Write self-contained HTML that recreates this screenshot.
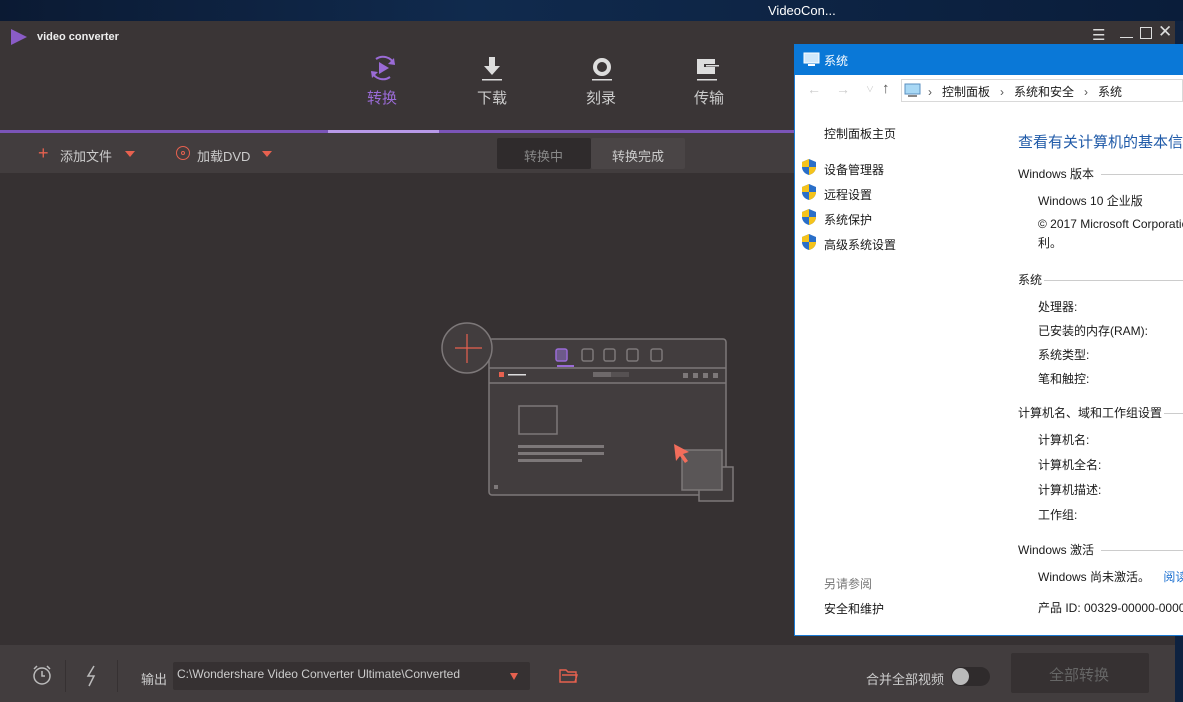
<!DOCTYPE html>
<html><head><meta charset="utf-8">
<style>
*{margin:0;padding:0;box-sizing:border-box}
body{width:1183px;height:702px;overflow:hidden;position:relative;background:#0e2240;font-family:"Liberation Sans","Noto Sans CJK SC",sans-serif}
.a{position:absolute}
.t{color:#fff;white-space:nowrap}
.w{position:absolute;white-space:nowrap;font-size:12px;color:#1a1a1a}
</style></head><body>
<div class="a" style="left:0;top:0;width:1183px;height:21px;background:linear-gradient(90deg,#0b1a33,#102a4d 40%,#0a1d3a)"></div>
<div class="a t" style="left:768px;top:3px;font-size:13px">VideoCon...</div>
<!-- app -->
<div class="a" style="left:0;top:21px;width:1175px;height:681px;background:#3a3536"></div>
<svg class="a" style="left:10px;top:28px" width="18" height="18"><polygon points="1,1 17,9 1,17" fill="#8a5cc7"/></svg>
<div class="a t" style="left:37px;top:31px;font-size:11px;font-weight:bold;color:#eee">video converter</div>
<div class="a" style="left:1092px;top:26px;color:#ddd;font-size:15px">☰</div>
<div class="a" style="left:1120px;top:29px;width:13px;height:9px;border-bottom:1.5px solid #ddd"></div>
<div class="a" style="left:1140px;top:27px;width:12px;height:12px;border:1.5px solid #ddd"></div>
<div class="a" style="left:1158px;top:22px;color:#ddd;font-size:17px">✕</div>
<!-- nav -->
<svg class="a" style="left:368px;top:53px" width="30" height="30"><path d="M8 6A12 12 0 0 1 26 11M22 24A12 12 0 0 1 4 19" fill="none" stroke="#9a6bd6" stroke-width="2"/><polygon points="26,5 27,12 20,11" fill="#9a6bd6"/><polygon points="4,25 3,18 10,19" fill="#9a6bd6"/><polygon points="11,9 21,15 11,21" fill="#9a6bd6"/></svg>
<div class="a t" style="left:367px;top:87px;font-size:15px;color:#9a6bd6">转换</div>
<svg class="a" style="left:480px;top:56px" width="24" height="26"><rect x="9" y="1" width="6" height="9" fill="#ddd"/><polygon points="4,10 20,10 12,19" fill="#ddd"/><rect x="2" y="23" width="20" height="1.5" fill="#ddd"/></svg>
<div class="a t" style="left:477px;top:87px;font-size:15px;color:#ccc">下载</div>
<svg class="a" style="left:590px;top:56px" width="24" height="26"><circle cx="12" cy="11" r="7" fill="none" stroke="#ddd" stroke-width="4"/><rect x="2" y="23" width="20" height="1.5" fill="#ddd"/></svg>
<div class="a t" style="left:586px;top:87px;font-size:15px;color:#ccc">刻录</div>
<svg class="a" style="left:696px;top:56px" width="26" height="26"><rect x="1" y="3" width="18" height="15" fill="#ddd"/><rect x="8" y="8" width="16" height="3" fill="#3a3536"/><rect x="10" y="9" width="13" height="1.5" fill="#ddd"/><rect x="1" y="23" width="20" height="1.5" fill="#ddd"/></svg>
<div class="a t" style="left:694px;top:87px;font-size:15px;color:#ccc">传输</div>
<div class="a" style="left:0;top:130px;width:795px;height:3px;background:#7b55b8"></div>
<div class="a" style="left:328px;top:130px;width:111px;height:3px;background:#b89ae8"></div>
<!-- toolbar -->
<div class="a" style="left:0;top:133px;width:1175px;height:40px;background:#423d3e"></div>
<div class="a t" style="left:38px;top:143px;font-size:18px;color:#e7614f;line-height:20px">+</div>
<div class="a t" style="left:60px;top:146px;font-size:13px;color:#ccc">添加文件</div>
<div class="a" style="left:125px;top:151px;border:5px solid transparent;border-top:6px solid #e7614f"></div>
<div class="a" style="left:176px;top:146px;width:14px;height:14px;border:1.5px solid #e7614f;border-radius:50%"></div>
<div class="a" style="left:181px;top:151px;width:4px;height:4px;border:1px solid #e7614f;border-radius:50%"></div>
<div class="a t" style="left:197px;top:146px;font-size:13px;color:#ccc">加载DVD</div>
<div class="a" style="left:262px;top:151px;border:5px solid transparent;border-top:6px solid #e7614f"></div>
<div class="a" style="left:497px;top:138px;width:94px;height:31px;background:#2f2b2c;border-radius:2px"></div>
<div class="a" style="left:591px;top:138px;width:94px;height:31px;background:#4a4546;border-radius:2px"></div>
<div class="a t" style="left:524px;top:146px;font-size:13px;color:#888">转换中</div>
<div class="a t" style="left:612px;top:146px;font-size:13px;color:#ccc">转换完成</div>
<!-- main -->
<div class="a" style="left:0;top:173px;width:1175px;height:472px;background:#363132"></div>
<svg class="a" style="left:430px;top:315px" width="320" height="200">
<g fill="none" stroke="#7d7879" stroke-width="1.5">
<rect x="59" y="24" width="237" height="156" rx="3" fill="#423d3e"/>
<line x1="59" y1="53" x2="296" y2="53"/><line x1="59" y1="68" x2="296" y2="68"/>
<circle cx="37" cy="33" r="25" fill="#423d3e"/>
<rect x="89" y="91" width="38" height="28"/>
<rect x="126" y="34" width="11" height="12" rx="2" stroke="#9a6bd6" fill="#6d5a8a"/>
<rect x="152" y="34" width="11" height="12" rx="2"/><rect x="174" y="34" width="11" height="12" rx="2"/><rect x="197" y="34" width="11" height="12" rx="2"/><rect x="221" y="34" width="11" height="12" rx="2"/>
<rect x="269" y="152" width="34" height="34" fill="#3f3a3b"/>
<rect x="252" y="135" width="40" height="40" fill="#5a5657"/>
</g>
<rect x="127" y="50" width="17" height="2" fill="#9a6bd6"/>
<line x1="37" y1="19" x2="37" y2="48" stroke="#e7614f" stroke-width="1.2"/><line x1="25" y1="33" x2="52" y2="33" stroke="#e7614f" stroke-width="1.2"/>
<rect x="69" y="57" width="5" height="5" fill="#e7614f"/><rect x="78" y="59" width="18" height="1.5" fill="#ddd"/>
<rect x="163" y="57" width="18" height="5" fill="#6e696a"/><rect x="181" y="57" width="18" height="5" fill="#565152"/>
<g fill="#7d7879"><rect x="253" y="58" width="5" height="5"/><rect x="263" y="58" width="5" height="5"/><rect x="273" y="58" width="5" height="5"/><rect x="283" y="58" width="5" height="5"/><rect x="88" y="130" width="86" height="3"/><rect x="88" y="137" width="86" height="3"/><rect x="88" y="144" width="64" height="3"/><rect x="64" y="170" width="4" height="4"/></g>
<polygon points="244,129 259,137 253,139 258,146 255,148 250,141 246,146" fill="#f26d5b"/>
</svg>
<!-- bottom -->
<div class="a" style="left:0;top:645px;width:1175px;height:57px;background:#423d3e"></div>
<svg class="a" style="left:31px;top:664px" width="22" height="22"><circle cx="11" cy="12" r="8" fill="none" stroke="#bbb" stroke-width="1.5"/><path d="M11 7v5h3M3 5l3-3M19 5l-3-3" stroke="#bbb" stroke-width="1.5" fill="none"/></svg>
<div class="a" style="left:65px;top:660px;width:1px;height:32px;background:#363132"></div>
<svg class="a" style="left:85px;top:665px" width="14" height="22"><path d="M9 1L3 11h6L4 21" stroke="#bbb" stroke-width="1.5" fill="none"/></svg>
<div class="a" style="left:117px;top:660px;width:1px;height:32px;background:#363132"></div>
<div class="a t" style="left:141px;top:669px;font-size:13px;color:#ccc">输出</div>
<div class="a" style="left:173px;top:662px;width:357px;height:28px;background:#363132;border-radius:2px"></div>
<div class="a t" style="left:177px;top:667px;font-size:12px;color:#ccc">C:\Wondershare Video Converter Ultimate\Converted</div>
<div class="a" style="left:510px;top:673px;border:4px solid transparent;border-top:7px solid #e7614f"></div>
<svg class="a" style="left:559px;top:668px" width="20" height="16"><path d="M1 2h6l2 2h8v10H1z M3 7h15l-2 7" fill="none" stroke="#e7614f" stroke-width="1.4"/></svg>
<div class="a t" style="left:866px;top:669px;font-size:13px;color:#ccc">合并全部视频</div>
<div class="a" style="left:951px;top:667px;width:39px;height:19px;background:#2f2b2c;border-radius:10px"></div>
<div class="a" style="left:952px;top:668px;width:17px;height:17px;background:#bbb;border-radius:50%"></div>
<div class="a" style="left:1011px;top:653px;width:138px;height:40px;background:#363132;border-radius:2px"></div>
<div class="a t" style="left:1049px;top:664px;font-size:15px;color:#666">全部转换</div>
<!-- system window -->
<div class="a" style="left:794px;top:44px;width:389px;height:592px;background:#fff;border-left:1px solid #1a7ad4;border-bottom:1px solid #1a7ad4"></div>
<div class="a" style="left:794px;top:44px;width:389px;height:31px;background:#0a78d7"></div>
<svg class="a" style="left:803px;top:52px" width="17" height="14"><rect x="1" y="1" width="15" height="10" fill="#cfe8fb" stroke="#fff"/><rect x="5" y="12" width="7" height="2" fill="#fff"/></svg>
<div class="a t" style="left:824px;top:52px;font-size:12px">系统</div>
<div class="a" style="left:807px;top:81px;color:#ccc;font-size:14px">←</div>
<div class="a" style="left:836px;top:81px;color:#ccc;font-size:14px">→</div>
<div class="a" style="left:866px;top:84px;color:#ccc;font-size:8px">∨</div>
<div class="a" style="left:882px;top:80px;color:#555;font-size:15px">↑</div>
<div class="a" style="left:901px;top:79px;width:282px;height:23px;border:1px solid #d9d9d9"></div>
<svg class="a" style="left:904px;top:83px" width="17" height="14"><rect x="1" y="1" width="15" height="10" fill="#a8d8f5" stroke="#5a8fc0"/><rect x="4" y="12" width="9" height="2" fill="#888"/></svg>
<div class="w" style="left:928px;top:83px;color:#555">›&nbsp;&nbsp;&nbsp;<span style="color:#1a1a1a">控制面板</span>&nbsp;&nbsp;&nbsp;›&nbsp;&nbsp;&nbsp;<span style="color:#1a1a1a">系统和安全</span>&nbsp;&nbsp;&nbsp;›&nbsp;&nbsp;&nbsp;<span style="color:#1a1a1a">系统</span></div>
<div class="w" style="left:824px;top:125px">控制面板主页</div>
<svg width="0" height="0"><defs><g id="sh"><path d="M7 0L14 3v5c0 4-3 7-7 8C3 15 0 12 0 8V3z" fill="#2a6fc9"/><path d="M7 0v8H0V3zM7 8h7c0 4-3 7-7 8z" fill="#f5c31c"/></g></defs></svg>
<svg class="a" style="left:802px;top:159px" width="15" height="100"><use href="#sh"/><use href="#sh" y="25"/><use href="#sh" y="50"/><use href="#sh" y="75"/></svg>
<div class="w" style="left:824px;top:161px">设备管理器</div>
<div class="w" style="left:824px;top:186px">远程设置</div>
<div class="w" style="left:824px;top:211px">系统保护</div>
<div class="w" style="left:824px;top:236px">高级系统设置</div>
<div class="w" style="left:824px;top:575px;color:#777">另请参阅</div>
<div class="w" style="left:824px;top:600px">安全和维护</div>
<div class="w" style="left:1018px;top:131px;font-size:15px;color:#1f5aa8">查看有关计算机的基本信息</div>
<div class="w" style="left:1018px;top:165px">Windows 版本</div><div class="a" style="left:1101px;top:174px;width:82px;height:1px;background:#ccc"></div>
<div class="w" style="left:1038px;top:192px">Windows 10 企业版</div>
<div class="w" style="left:1038px;top:217px">© 2017 Microsoft Corporation</div>
<div class="w" style="left:1038px;top:234px">利。</div>
<div class="w" style="left:1018px;top:271px">系统</div><div class="a" style="left:1044px;top:280px;width:139px;height:1px;background:#ccc"></div>
<div class="w" style="left:1038px;top:298px">处理器:</div>
<div class="w" style="left:1038px;top:322px">已安装的内存(RAM):</div>
<div class="w" style="left:1038px;top:346px">系统类型:</div>
<div class="w" style="left:1038px;top:370px">笔和触控:</div>
<div class="w" style="left:1018px;top:404px">计算机名、域和工作组设置</div><div class="a" style="left:1164px;top:413px;width:19px;height:1px;background:#ccc"></div>
<div class="w" style="left:1038px;top:431px">计算机名:</div>
<div class="w" style="left:1038px;top:456px">计算机全名:</div>
<div class="w" style="left:1038px;top:481px">计算机描述:</div>
<div class="w" style="left:1038px;top:506px">工作组:</div>
<div class="w" style="left:1018px;top:541px">Windows 激活</div><div class="a" style="left:1101px;top:550px;width:82px;height:1px;background:#ccc"></div>
<div class="w" style="left:1038px;top:568px">Windows 尚未激活。 <span style="color:#1a6fd0;margin-left:10px">阅读</span></div>
<div class="w" style="left:1038px;top:599px">产品 ID: 00329-00000-00000</div>
</body></html>
